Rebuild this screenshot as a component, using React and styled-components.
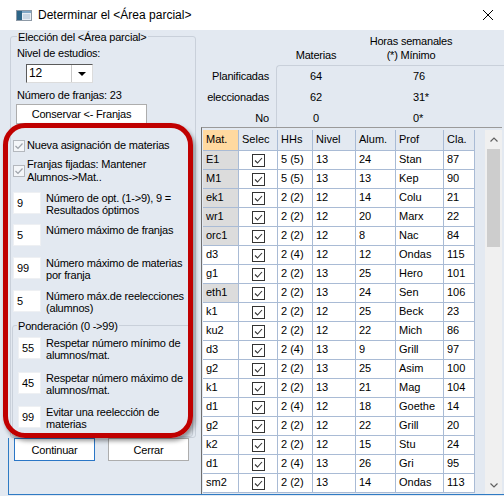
import React from "react";
import styled, { createGlobalStyle } from "styled-components";

const GlobalStyle = createGlobalStyle`
  html, body {
    margin: 0;
    padding: 0;
  }
  body {
    font-family: "Liberation Sans", Arial, sans-serif;
    font-size: 11px;
    color: #000;
  }
`;

const Window = styled.div`
  position: relative;
  width: 504px;
  height: 496px;
  display: flex;
  flex-direction: column;
  background: #e3e9f1;
  overflow: hidden;
`;

const TitleBar = styled.div`
  height: 30px;
  flex: none;
  display: flex;
  align-items: center;
  background: #fff;
  padding-left: 16px;
  font-size: 12px;
`;

const TitleText = styled.span`
  margin-left: 6px;
`;

const CloseGlyph = styled.svg`
  margin-left: auto;
  margin-right: 11px;
`;

const Body = styled.div`
  flex: 1;
  display: flex;
  padding-bottom: 1px;
`;

const LeftCol = styled.div`
  width: 196px;
  flex: none;
  display: flex;
  flex-direction: column;
  letter-spacing: -0.2px;
`;

const GroupBox = styled.div`
  margin: ${(p) => p.$mt}px 0 0 ${(p) => p.$ml}px;
  width: ${(p) => p.$w}px;
  box-sizing: border-box;
  border: 1px solid #c9d0da;
  border-radius: 3px;
  padding-bottom: ${(p) => p.$pb}px;
`;

const GroupTitle = styled.div`
  display: table;
  margin: -6px 0 0 ${(p) => p.$ml}px;
  padding: 0 1px;
  line-height: 13px;
  background: #e3e9f1;
`;

const Line = styled.div`
  margin: ${(p) => p.$mt}px 0 0 6px;
  line-height: 13px;
  white-space: nowrap;
`;

const Combo = styled.div`
  margin: 4px 0 0 15px;
  width: 67px;
  height: 19px;
  box-sizing: border-box;
  display: flex;
  background: #fff;
  border: 1px solid;
  border-color: #5a5a5a #dcdcdc #dcdcdc #5a5a5a;
`;

const ComboText = styled.span`
  flex: 1;
  padding-left: 2px;
  line-height: 17px;
  font-size: 12px;
`;

const ComboButton = styled.div`
  width: 20px;
  display: flex;
  align-items: center;
  justify-content: center;
  border-left: 1px solid #c8c8c8;
`;

const PushButton = styled.button`
  margin: ${(p) => p.$mt}px 0 0 ${(p) => p.$ml}px;
  width: ${(p) => p.$w}px;
  height: ${(p) => p.$h}px;
  padding: 0;
  background: #fff;
  border: 1px solid ${(p) => (p.$focus ? "#2a76c6" : "#adadad")};
  font-family: inherit;
  font-size: 11px;
  letter-spacing: -0.2px;
  color: #000;
`;

const CheckRow = styled.div`
  margin: ${(p) => p.$mt}px 0 0 2px;
  display: flex;
  align-items: center;
  line-height: 13px;
`;

const CheckLabel = styled.span`
  margin-left: 2px;
`;

const InputRow = styled.div`
  margin: ${(p) => p.$mt}px 0 0 ${(p) => p.$ml}px;
  display: flex;
  align-items: flex-start;
`;

const NumBox = styled.div`
  width: ${(p) => p.$w}px;
  height: 22px;
  box-sizing: border-box;
  flex: none;
  background: #fff;
  border: 1px solid #eef0f3;
  padding-left: 3px;
  line-height: 20px;
`;

const InputLabel = styled.div`
  margin-left: 5px;
  line-height: 12px;
  white-space: nowrap;
`;

const ButtonArea = styled.div`
  flex: 1;
  margin-left: 8px;
  border-left: 1px solid #2f7bc4;
  border-bottom: 1px solid #2f7bc4;
  display: flex;
`;

const RightCol = styled.div`
  flex: 1;
  display: flex;
  flex-direction: column;
  border-bottom: 1px solid #2f7bc4;
`;

const Stats = styled.div`
  flex: none;
  display: grid;
  grid-template-columns: 80px 80px 110px 1fr;
  grid-template-rows: 35px 21px 22px 19px;
  letter-spacing: -0.2px;
`;

const ValueFrame = styled.div`
  grid-column: 2 / -1;
  grid-row: 2 / -1;
  border-top: 1px solid #c9d0da;
  border-left: 1px solid #c9d0da;
  border-top-left-radius: 4px;
`;

const ColHead = styled.div`
  grid-row: 1;
  grid-column: ${(p) => p.$col};
  align-self: end;
  padding-bottom: 3px;
  text-align: center;
  line-height: 14px;
`;

const RowLabel = styled.div`
  grid-column: 1;
  grid-row: ${(p) => p.$row};
  align-self: center;
  text-align: right;
  padding-right: 7px;
`;

const Value = styled.div`
  grid-column: ${(p) => p.$col};
  grid-row: ${(p) => p.$row};
  align-self: center;
  text-align: ${(p) => (p.$left ? "left" : "center")};
  padding-left: ${(p) => (p.$left ? 57 : 0)}px;
`;

const TableFrame = styled.div`
  flex: 1;
  margin: 0 2px 0 5px;
  display: flex;
  border-top: 1px solid #9a9a9a;
  border-left: 1px solid #6f6f6f;
  min-height: 0;
`;

const GridWrap = styled.div`
  flex: 1;
  padding: 2px 0 0 1px;
  overflow: hidden;
`;

const Grid = styled.div`
  display: grid;
  grid-template-columns: 36px 39px 35px 43px 40px 48px 31px;
  grid-template-rows: 21px;
  grid-auto-rows: 19px;
  width: 272px;
`;

const Cell = styled.div`
  box-sizing: border-box;
  border-right: 1px solid #a9bbd5;
  border-bottom: 1px solid #a9bbd5;
  padding-left: 3px;
  line-height: ${(p) => (p.$head ? 19 : 17)}px;
  white-space: nowrap;
  overflow: hidden;
  background: ${(p) => p.$bg || "#fff"};
`;

const CheckCell = styled(Cell)`
  display: flex;
  align-items: center;
  justify-content: center;
  padding: 0;
`;

const Scrollbar = styled.div`
  width: 17px;
  flex: none;
  margin-top: 2px;
  display: flex;
  flex-direction: column;
  background: #f0f0f0;
`;

const ScrollArrow = styled.div`
  height: ${(p) => p.$h}px;
  flex: none;
  display: flex;
  align-items: center;
  justify-content: center;
`;

const Thumb = styled.div`
  height: 98px;
  margin: 0 2px;
  background: #cdcdcd;
`;

const Spacer = styled.div`
  flex: 1;
`;

const Annotation = styled.div`
  position: absolute;
  left: 3px;
  top: 123px;
  width: 190px;
  height: 315px;
  box-sizing: border-box;
  border: 5px solid #c00000;
  border-radius: 22px;
  box-shadow: 2px 3px 4px rgba(0, 0, 0, 0.4);
  pointer-events: none;
`;

const AppIcon = () => (
  <svg width="16" height="11" viewBox="0 0 16 11">
    <rect x="0.5" y="0.5" width="15" height="10" fill="#e8edf3" stroke="#8d99a6" />
    <rect x="1" y="1" width="5" height="9" fill="#2d6587" />
    <rect x="6" y="1" width="9" height="2" fill="#7fa6c4" />
    <rect x="7" y="4" width="7" height="5" fill="#c9d6e2" />
  </svg>
);

const LightCheck = () => (
  <svg width="12" height="12" viewBox="0 0 12 12">
    <rect x="0.5" y="0.5" width="11" height="11" fill="#f4f6f9" stroke="#b4b8be" />
    <path d="M2.5 6 L5 8.5 L9.5 3.5" fill="none" stroke="#9ea3aa" strokeWidth="1.2" />
  </svg>
);

const GridCheck = () => (
  <svg width="13" height="13" viewBox="0 0 13 13">
    <rect x="0.5" y="0.5" width="12" height="12" fill="#fff" stroke="#333" />
    <path d="M3 6.5 L5.5 9 L10 4" fill="none" stroke="#333" strokeWidth="1.1" />
  </svg>
);

const Chevron = ({ up }) => (
  <svg width="8" height="5" viewBox="0 0 8 5">
    <path
      d={up ? "M0.5 4.5 L4 1 L7.5 4.5" : "M0.5 0.5 L4 4 L7.5 0.5"}
      fill="none"
      stroke="#606060"
      strokeWidth="1.2"
    />
  </svg>
);

const rows = [
  ["E1", "5 (5)", "13", "24", "Stan", "87", true],
  ["M1", "5 (5)", "13", "13", "Kep", "90", true],
  ["ek1", "2 (2)", "12", "14", "Colu", "21", true],
  ["wr1", "2 (2)", "12", "20", "Marx", "22", true],
  ["orc1", "2 (2)", "12", "8", "Nac", "84", true],
  ["d3", "2 (4)", "12", "12", "Ondas", "115"],
  ["g1", "2 (2)", "13", "25", "Hero", "101"],
  ["eth1", "2 (2)", "13", "24", "Sen", "106", true],
  ["k1", "2 (2)", "12", "25", "Beck", "23"],
  ["ku2", "2 (2)", "12", "22", "Mich", "86"],
  ["d3", "2 (4)", "13", "9", "Grill", "97"],
  ["g2", "2 (2)", "13", "25", "Asim", "100"],
  ["k1", "2 (2)", "13", "21", "Mag", "104"],
  ["d1", "2 (4)", "12", "18", "Goethe", "14"],
  ["g2", "2 (2)", "12", "22", "Grill", "20"],
  ["k2", "2 (2)", "12", "15", "Stu", "24"],
  ["d1", "2 (4)", "13", "26", "Gri", "95"],
  ["sm2", "2 (2)", "13", "14", "Ondas", "113"],
];

const headers = ["Selec", "HHs", "Nivel", "Alum.", "Prof", "Cla."];

export default function App() {
  return (
    <Window>
      <GlobalStyle />
      <TitleBar>
        <AppIcon />
        <TitleText>Determinar el &lt;Área parcial&gt;</TitleText>
        <CloseGlyph width="10" height="10" viewBox="0 0 10 10">
          <path d="M0 0 L10 10 M10 0 L0 10" stroke="#000" strokeWidth="1" />
        </CloseGlyph>
      </TitleBar>

      <Body>
        <LeftCol>
          <GroupBox $mt={6} $ml={10} $w={186} $pb={0}>
            <GroupTitle $ml={6}>Elección del &lt;Área parcial&gt;</GroupTitle>
            <Line $mt={3}>Nivel de estudios:</Line>
            <Combo>
              <ComboText>12</ComboText>
              <ComboButton>
                <svg width="8" height="4" viewBox="0 0 8 4">
                  <path d="M0 0 L8 0 L4 4 Z" fill="#000" />
                </svg>
              </ComboButton>
            </Combo>
            <Line $mt={6}>Número de franjas: 23</Line>
            <PushButton $mt={2} $ml={5} $w={131} $h={20}>
              Conservar &lt;- Franjas
            </PushButton>

            <CheckRow $mt={15}>
              <LightCheck />
              <CheckLabel>Nueva asignación de materias</CheckLabel>
            </CheckRow>
            <CheckRow $mt={6}>
              <LightCheck />
              <CheckLabel>
                Franjas fijadas: Mantener
                <br />
                Alumnos-&gt;Mat..
              </CheckLabel>
            </CheckRow>

            <InputRow $mt={8} $ml={2}>
              <NumBox $w={28}>9</NumBox>
              <InputLabel>
                Número de opt. (1-&gt;9), 9 =
                <br />
                Resultados óptimos
              </InputLabel>
            </InputRow>
            <InputRow $mt={8} $ml={2}>
              <NumBox $w={28}>5</NumBox>
              <InputLabel>Número máximo de franjas</InputLabel>
            </InputRow>
            <InputRow $mt={11} $ml={2}>
              <NumBox $w={28}>99</NumBox>
              <InputLabel>
                Número máximo de materias
                <br />
                por franja
              </InputLabel>
            </InputRow>
            <InputRow $mt={9} $ml={2}>
              <NumBox $w={28}>5</NumBox>
              <InputLabel>
                Número máx.de reelecciones
                <br />
                (alumnos)
              </InputLabel>
            </InputRow>

            <GroupBox $mt={11} $ml={1} $w={181} $pb={6}>
              <GroupTitle $ml={4}>Ponderación (0 -&gt;99)</GroupTitle>
              <InputRow $mt={4} $ml={5}>
                <NumBox $w={23}>55</NumBox>
                <InputLabel>
                  Respetar número mínimo de
                  <br />
                  alumnos/mat.
                </InputLabel>
              </InputRow>
              <InputRow $mt={11} $ml={5}>
                <NumBox $w={23}>45</NumBox>
                <InputLabel>
                  Respetar número máximo de
                  <br />
                  alumnos/mat.
                </InputLabel>
              </InputRow>
              <InputRow $mt={10} $ml={5}>
                <NumBox $w={23}>99</NumBox>
                <InputLabel>
                  Evitar una reelección de
                  <br />
                  materias
                </InputLabel>
              </InputRow>
            </GroupBox>
          </GroupBox>

          <ButtonArea>
            <PushButton $mt={0} $ml={5} $w={81} $h={23} $focus>
              Continuar
            </PushButton>
            <PushButton $mt={0} $ml={13} $w={81} $h={23}>
              Cerrar
            </PushButton>
          </ButtonArea>
        </LeftCol>

        <RightCol>
          <Stats>
            <ValueFrame />
            <ColHead $col={2}>Materias</ColHead>
            <ColHead $col={3}>
              Horas semanales
              <br />
              (*) Mínimo
            </ColHead>
            <RowLabel $row={2}>Planificadas</RowLabel>
            <RowLabel $row={3}>eleccionadas</RowLabel>
            <RowLabel $row={4}>No</RowLabel>
            <Value $col={2} $row={2}>64</Value>
            <Value $col={3} $row={2} $left>76</Value>
            <Value $col={2} $row={3}>62</Value>
            <Value $col={3} $row={3} $left>31*</Value>
            <Value $col={2} $row={4}>0</Value>
            <Value $col={3} $row={4} $left>0*</Value>
          </Stats>

          <TableFrame>
            <GridWrap>
              <Grid>
                <Cell $head $bg="#ffd9a0">Mat.</Cell>
                {headers.map((h) => (
                  <Cell key={h} $head $bg="#e3e9f1">
                    {h}
                  </Cell>
                ))}
                {rows.map((r, i) => (
                  <React.Fragment key={i}>
                    <Cell $bg={r[6] ? "#dcdcdc" : "#fff"}>{r[0]}</Cell>
                    <CheckCell>
                      <GridCheck />
                    </CheckCell>
                    <Cell>{r[1]}</Cell>
                    <Cell>{r[2]}</Cell>
                    <Cell>{r[3]}</Cell>
                    <Cell>{r[4]}</Cell>
                    <Cell>{r[5]}</Cell>
                  </React.Fragment>
                ))}
              </Grid>
            </GridWrap>
            <Scrollbar>
              <ScrollArrow $h={19}>
                <Chevron up />
              </ScrollArrow>
              <Thumb />
              <Spacer />
              <ScrollArrow $h={17}>
                <Chevron />
              </ScrollArrow>
            </Scrollbar>
          </TableFrame>
        </RightCol>
      </Body>

      <Annotation />
    </Window>
  );
}
